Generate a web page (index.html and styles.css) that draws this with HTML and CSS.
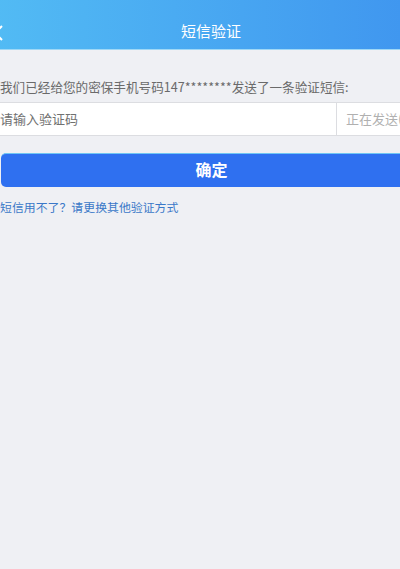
FILE: index.html
```html
<!doctype html>
<html>

<head>
	<meta charset="utf-8">
	<title>短信验证</title>
	<link rel="stylesheet" href="styles.css">
</head>

<body>
	<div class="page">
		<div class="header">
			<div class="back">
				<svg width="10" height="16" viewBox="0 0 10 16"><path d="M8 1 L1 8 L8 15" fill="none" stroke="#ffffff" stroke-width="2" /></svg>
			</div>
			<div class="title">短信验证</div>
		</div>

		<div class="content">
			<div class="tip">我们已经给您的密保手机号码147********发送了一条验证短信:</div>
			<div class="codeRow">
				<div class="codeInput">请输入验证码</div>
				<div class="sendBtn">正在发送(</div>
			</div>
			<div class="okBtn">确定</div>
			<div class="other">短信用不了？请更换其他验证方式</div>
		</div>
	</div>
</body>

</html>
```

FILE: styles.css
```css
html,
body {
	margin: 0;
	padding: 0;
	background-color: #eff0f4;
	overflow: hidden;
}

.page {
	width: 422px;
	height: 569px;
	font-family: 'Noto Sans CJK SC', 'Noto Sans', sans-serif;
	background-color: #eff0f4;
}

.header {
	display: flex;
	align-items: center;
	justify-content: center;
	height: 50px;
	background: linear-gradient(90deg, #52bbf4, #3f95ef);
	border-bottom: 1px solid #9fd8f6;
	box-sizing: border-box;
	margin-left: -6px;
	width: 428px;
	position: relative;
}

.back {
	position: absolute;
	left: 0;
	top: 22px;
	height: 16px;
}

.title {
	color: #ffffff;
	font-size: 15px;
	padding-left: 6px;
	padding-top: 11px;
}

.content {
	display: flex;
	flex-direction: column;
}

.tip {
	margin-top: 28px;
	font-size: 12.6px;
	line-height: 18px;
	color: #6a6a6a;
	white-space: nowrap;
}

.codeRow {
	display: flex;
	margin-top: 6px;
	height: 34px;
	background-color: #ffffff;
	border-top: 1px solid #dcdde1;
	border-bottom: 1px solid #dcdde1;
	box-sizing: border-box;
}

.codeInput {
	width: 336px;
	font-size: 13px;
	line-height: 32px;
	color: #707070;
	border-right: 1px solid #dcdde1;
}

.sendBtn {
	flex: 1;
	padding-left: 9px;
	font-size: 13px;
	line-height: 32px;
	color: #b0b0b0;
	white-space: nowrap;
}

.okBtn {
	margin-top: 17px;
	margin-left: 1px;
	height: 34px;
	border-radius: 5px;
	background-color: #2f70f0;
	border-top: 1px solid #6fc6f4;
	box-sizing: border-box;
	color: #ffffff;
	font-size: 16px;
	font-weight: 700;
	line-height: 31px;
	text-align: center;
}

.other {
	margin-top: 12px;
	font-size: 11.9px;
	line-height: 16px;
	color: #3a78c8;
}
```
